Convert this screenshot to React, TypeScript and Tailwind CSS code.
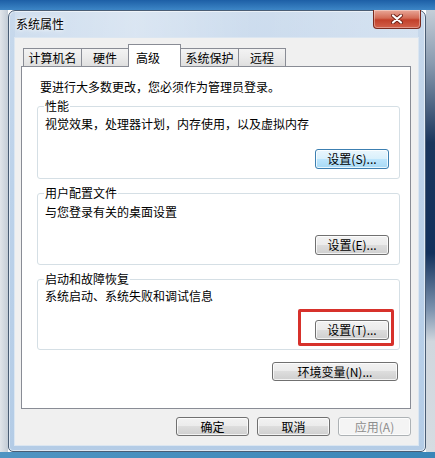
import React from "react";

const FONT = "font-['Noto_Sans_CJK_SC',sans-serif]";

function Btn({
  children,
  className = "",
  variant = "normal",
}: {
  children: React.ReactNode;
  className?: string;
  variant?: "normal" | "focus" | "disabled";
}) {
  const v =
    variant === "focus"
      ? "border-[#3c7fb1] bg-[linear-gradient(to_bottom,#eaf6fd_0%,#d9f0fc_49%,#bee6fd_50%,#a7d9f5_100%)] text-black"
      : variant === "disabled"
      ? "border-[#adb2b5] bg-[#f4f4f4] text-[#8d8d8d]"
      : "border-[#707070] bg-[linear-gradient(to_bottom,#f2f2f2_0%,#ebebeb_49%,#dddddd_50%,#cfcfcf_100%)] text-black";
  return (
    <div
      className={`flex items-center justify-center rounded-[3px] border shadow-[inset_0_0_0_1px_rgba(255,255,255,0.75)] text-[12px] leading-[14px] ${v} ${className}`}
    >
      {children}
    </div>
  );
}

function Group({
  title,
  text,
  btn,
  textMt,
  btnMt,
  className = "",
  btnVariant = "normal",
  highlight = false,
}: {
  title: string;
  text: string;
  btn: string;
  textMt: string;
  btnMt: string;
  className?: string;
  btnVariant?: "normal" | "focus";
  highlight?: boolean;
}) {
  return (
    <fieldset
      className={`rounded-[3px] border border-[#d5dfe5] pl-[7px] pr-[10px] pb-[9px] ${className}`}
    >
      <legend className="-ml-px px-px text-[12px] leading-[14px]">{title}</legend>
      <div className={`text-[12px] leading-[14px] ${textMt}`}>{text}</div>
      <div className={`flex justify-end ${btnMt}`}>
        <div className="relative">
          <Btn variant={btnVariant} className="h-[20px] w-[74px]">
            {btn}
          </Btn>
          {highlight && (
            <div className="pointer-events-none absolute -left-[17px] -right-[5px] -top-[11px] -bottom-[6px] rounded-[2px] border-[3px] border-[#d7312b]" />
          )}
        </div>
      </div>
    </fieldset>
  );
}

function Tab({
  label,
  w,
  selected = false,
  first = false,
}: {
  label: string;
  w: string;
  selected?: boolean;
  first?: boolean;
}) {
  if (selected) {
    return (
      <div
        className={`relative z-10 -mb-px -ml-px flex h-[23px] items-start border border-b-0 border-[#898c95] bg-white pl-[7px] pt-[6px] text-[12px] leading-[14px] ${w}`}
      >
        {label}
      </div>
    );
  }
  return (
    <div
      className={`flex h-[18px] items-start justify-center border border-b-0 border-[#898c95] bg-[linear-gradient(to_bottom,#f3f3f3_0%,#ebebeb_50%,#dfdfdf_100%)] pt-[2px] text-[12px] leading-[14px] ${first ? "" : "-ml-px"} ${w}`}
    >
      {label}
    </div>
  );
}

export default function App() {
  return (
    <div className={`flex h-[458px] w-[435px] flex-col overflow-hidden text-black ${FONT}`}>
      {/* desktop top band */}
      <div className="h-[10px] shrink-0 bg-[linear-gradient(to_bottom,#1d5fa6,#3d86c6)]" />
      <div className="flex h-[442px] shrink-0">
        {/* left desktop strip */}
        <div className="w-[8px] bg-[linear-gradient(to_right,#e1e5ea,#c3ccd6)]" />
        {/* window */}
        <div className="flex w-[418px] flex-col rounded-t-[7px] rounded-b-[5px] border border-[#4a5d74] bg-[linear-gradient(to_bottom,#c8d9ec_0%,#bcd2ea_40%,#b4cce6_100%)] pb-[6px] pl-[6px] pr-[7px] shadow-[inset_0_0_0_1px_rgba(255,255,255,0.55)]">
          {/* title bar */}
          <div className="flex h-[27px] items-start justify-between bg-[linear-gradient(to_right,rgba(255,255,255,0.15),rgba(255,255,255,0.35)_30%,rgba(255,255,255,0.1)_60%,rgba(255,255,255,0.25))]">
            <div className="pl-px pt-[6px] text-[12px] leading-[14px] [text-shadow:0_0_6px_#ffffff,0_0_3px_#ffffff]">
              系统属性
            </div>
            <div className="-mt-px -mr-[3px] flex h-[19px] w-[48px] items-center justify-center rounded-b-[4px] border border-t-0 border-[#7a2a1e] bg-[linear-gradient(to_bottom,#e9a899_0%,#d36b55_45%,#c2402a_55%,#d2614b_100%)] shadow-[inset_0_0_0_1px_rgba(255,255,255,0.35)]">
              <svg width="12" height="10" viewBox="0 0 12 10">
                <path d="M2 1.5 L10 8.5 M10 1.5 L2 8.5" stroke="#6e2218" strokeWidth="4" strokeLinecap="round" />
                <path d="M2 1.5 L10 8.5 M10 1.5 L2 8.5" stroke="#ffffff" strokeWidth="2.2" strokeLinecap="round" />
              </svg>
            </div>
          </div>
          {/* client area */}
          <div className="flex flex-1 flex-col bg-[#f0f0f0] pl-[6px] pr-[7px] pt-[6px] shadow-[0_0_0_1px_#dbe6f1]">
            <div className="flex h-[22px] items-end pl-[2px]">
              <Tab label="计算机名" w="w-[59px]" first />
              <Tab label="硬件" w="w-[48px]" />
              <Tab label="高级" w="w-[53px]" selected />
              <Tab label="系统保护" w="w-[59px]" />
              <Tab label="远程" w="w-[48px]" />
            </div>
            <div className="flex h-[343px] flex-col border border-[#898c95] bg-white pl-[15px] pr-[10px] pt-[13px]">
              <div className="ml-[3px] text-[12px] leading-[14px]">
                要进行大多数更改，您必须作为管理员登录。
              </div>
              <Group
                className="mt-[5px]"
                title="性能"
                text="视觉效果，处理器计划，内存使用，以及虚拟内存"
                btn="设置(S)..."
                textMt="mt-[4px]"
                btnMt="mt-[18px]"
                btnVariant="focus"
              />
              <Group
                className="mt-[7px]"
                title="用户配置文件"
                text="与您登录有关的桌面设置"
                btn="设置(E)..."
                textMt="mt-[5px]"
                btnMt="mt-[16px]"
              />
              <Group
                className="mt-[7px]"
                title="启动和故障恢复"
                text="系统启动、系统失败和调试信息"
                btn="设置(T)..."
                textMt="mt-[3px]"
                btnMt="mt-[17px]"
                highlight
              />
              <div className="mt-[12px] flex justify-end pr-[2px]">
                <Btn className="h-[19px] w-[126px]">环境变量(N)...</Btn>
              </div>
            </div>
            <div className="mt-[8px] flex justify-end gap-[8px]">
              <Btn className="h-[19px] w-[73px]">确定</Btn>
              <Btn className="h-[19px] w-[73px]">取消</Btn>
              <Btn className="h-[19px] w-[73px]" variant="disabled">
                应用(A)
              </Btn>
            </div>
          </div>
        </div>
        {/* right desktop strip */}
        <div className="flex-1 bg-[linear-gradient(to_bottom,#c5ced8_0%,#8a9bb0_12%,#1a355c_30%,#12305c_55%,#7f95b0_68%,#d0d7de_75%,#d6dce2_100%)]" />
      </div>
      {/* desktop bottom band */}
      <div className="flex-1 bg-[linear-gradient(to_right,#4f94c2,#3a86b8)]" />
    </div>
  );
}
